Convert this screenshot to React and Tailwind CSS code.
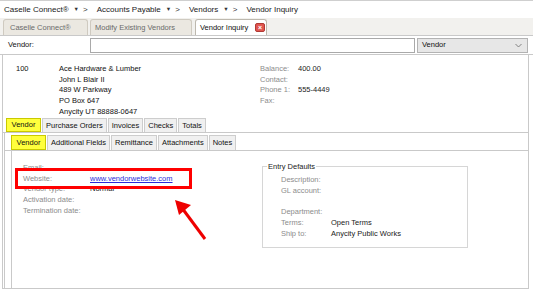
import React from "react";

const F = "font-['Liberation_Sans',Arial,sans-serif]";

function Crumb({ children, last }) {
  return (
    <div className="flex items-center">
      <span>{children}</span>
      {!last && (
        <span className="flex items-center ml-[5px] mr-[9px] text-[#333]">
          <span className="text-[5.5px] leading-none">▼</span>
          <span className="ml-[4px]">&gt;</span>
        </span>
      )}
    </div>
  );
}

function Row({ label, value, lw = "w-[67px]", link }) {
  return (
    <div className="flex h-[10.8px] items-center">
      <span className={`${lw} shrink-0 text-[#8c8c8c]`}>{label}</span>
      {link ? (
        <span className="text-[#2b2bd9] underline">{value}</span>
      ) : (
        <span className="text-[#1a1a1a]">{value}</span>
      )}
    </div>
  );
}

export default function App() {
  return (
    <div className={`relative w-[533px] h-[291px] bg-white overflow-hidden ${F} text-[7.5px] text-[#111]`}>
      {/* Breadcrumb */}
      <div className="h-[18px] flex items-center pl-[4px] text-[8px] text-[#1a1a1a] border-t border-[#cfcfcf]">
        <Crumb>Caselle Connect®</Crumb>
        <Crumb>Accounts Payable</Crumb>
        <Crumb>Vendors</Crumb>
        <Crumb last>Vendor Inquiry</Crumb>
      </div>
      {/* Document tabs */}
      <div className="h-[18px] bg-[#f2f1ee] flex items-end pl-[3px] gap-[2px] border-b border-[#c9c9c9]">
        <div className="h-[16px] w-[85px] flex items-center pl-[6px] rounded-t-[3px] border border-b-0 border-[#cfcac0] bg-[#ebe8e1] text-[#6a6a6a] text-[7.5px]">
          Caselle Connect®
        </div>
        <div className="h-[16px] w-[102px] flex items-center pl-[4px] rounded-t-[3px] border border-b-0 border-[#cfcac0] bg-[#ebe8e1] text-[#6a6a6a] text-[7.5px]">
          Modify Existing Vendors
        </div>
        <div className="h-[16px] w-[72px] ml-[1px] flex items-center pl-[4px] rounded-t-[3px] border border-b-0 border-[#bdb8ae] bg-white text-[#111] text-[7.5px] relative">
          Vendor Inquiry
          <span className="absolute right-[1px] top-[3px] w-[10px] h-[9px] rounded-[2px] bg-[#e0554f] border border-[#b03a34] flex items-center justify-center text-white text-[7px] leading-none font-bold">
            ×
          </span>
        </div>
      </div>
      {/* Vendor lookup row */}
      <div className="h-[19px] flex items-center border-b border-[#c9c9c9]">
        <span className="w-[90px] pl-[8px]">Vendor:</span>
        <div className="w-[325px] h-[15px] border border-[#a9a9a9] bg-white" />
        <div className="ml-[2px] w-[111px] h-[15px] border border-[#b3b3b3] bg-[#e7e7e7] flex items-center justify-between pl-[4px] pr-[5px]">
          <span>Vendor</span>
          <svg width="7" height="5" viewBox="0 0 7 5">
            <path d="M0.5 1 L3.5 4 L6.5 1" fill="none" stroke="#777" strokeWidth="0.9" />
          </svg>
        </div>
      </div>
      {/* Main area */}
      <div className="ml-[2px] w-[527px] h-[234px] border-l border-r border-b border-[#c9c9c9] flex flex-col">
        {/* Info */}
        <div className="h-[64px] flex pt-[8px]">
          <div className="w-[56px] pl-[13px]">
            <div className="h-[10.8px] flex items-center">100</div>
          </div>
          <div className="w-[201px]">
            {["Ace Hardware & Lumber", "John L Blair II", "489 W Parkway", "PO Box 647", "Anycity UT 88888-0647"].map((t) => (
              <div key={t} className="h-[10.8px] flex items-center">{t}</div>
            ))}
          </div>
          <div>
            <Row label="Balance:" value="400.00" lw="w-[38px]" />
            <Row label="Contact:" value="" lw="w-[38px]" />
            <Row label="Phone 1:" value="555-4449" lw="w-[38px]" />
            <Row label="Fax:" value="" lw="w-[38px]" />
          </div>
        </div>
        {/* Outer tabs */}
        <div className="h-[14px] flex items-end pl-[3px] gap-[1px] border-b border-[#c9c9c9]">
          <div className="h-[14px] w-[35px] flex items-center justify-center bg-[#ffff3c] border border-[#c9c900] text-[#111]">Vendor</div>
          <div className="h-[14px] flex items-center px-[3px] bg-[#f0f0f0] border border-b-0 border-[#cdcdcd]">Purchase Orders</div>
          <div className="h-[14px] flex items-center px-[3px] bg-[#f0f0f0] border border-b-0 border-[#cdcdcd]">Invoices</div>
          <div className="h-[14px] flex items-center px-[3px] bg-[#f0f0f0] border border-b-0 border-[#cdcdcd]">Checks</div>
          <div className="h-[14px] flex items-center px-[3px] bg-[#f0f0f0] border border-b-0 border-[#cdcdcd]">Totals</div>
        </div>
        {/* Outer panel */}
        <div className="flex-1 ml-[1px] border-l border-[#c9c9c9] flex flex-col">
          <div className="h-[18px] flex items-end pl-[6px] gap-[1px] border-b border-[#c9c9c9]">
            <div className="h-[15px] w-[35px] flex items-center justify-center bg-[#ffff3c] border border-[#c9c900]">Vendor</div>
            <div className="h-[15px] flex items-center px-[3px] bg-[#f0f0f0] border border-b-0 border-[#cdcdcd]">Additional Fields</div>
            <div className="h-[15px] flex items-center px-[3px] bg-[#f0f0f0] border border-b-0 border-[#cdcdcd]">Remittance</div>
            <div className="h-[15px] flex items-center px-[3px] bg-[#f0f0f0] border border-b-0 border-[#cdcdcd]">Attachments</div>
            <div className="h-[15px] flex items-center px-[3px] bg-[#f0f0f0] border border-b-0 border-[#cdcdcd]">Notes</div>
          </div>
          <div className="flex-1 ml-[6px] border-l border-[#c9c9c9] flex items-start">
            <div className="w-[250px] pl-[11px] pt-[11px]">
              <Row label="Email:" value="" />
              <Row label="Website:" value="www.vendorwebsite.com" link />
              <Row label="Vendor type:" value="Normal" />
              <Row label="Activation date:" value="" />
              <Row label="Termination date:" value="" />
            </div>
            <div className="relative w-[206px] h-[82px] mt-[15px] border border-[#d6d6d6]">
              <span className="absolute left-[4px] top-[-6px] bg-white px-[1px] text-[#222]">Entry Defaults</span>
              <div className="pl-[18px] pt-[7px]">
                <Row label="Description:" value="" lw="w-[50px]" />
                <Row label="GL account:" value="" lw="w-[50px]" />
                <div className="h-[10.8px]" />
                <Row label="Department:" value="" lw="w-[50px]" />
                <Row label="Terms:" value="Open Terms" lw="w-[50px]" />
                <Row label="Ship to:" value="Anycity Public Works" lw="w-[50px]" />
              </div>
            </div>
          </div>
        </div>
      </div>
      {/* Red highlight box */}
      <div className="absolute left-[15px] top-[168px] w-[177px] h-[21px] border-[3px] border-[#ff0000]" />
      {/* Red arrow */}
      <svg className="absolute left-[170px] top-[195px]" width="42" height="50" viewBox="0 0 42 50">
        <line x1="35" y1="44" x2="12" y2="13" stroke="#ee0000" strokeWidth="3" />
        <polygon points="5,5 21,10 9,20" fill="#ee0000" />
      </svg>
    </div>
  );
}
